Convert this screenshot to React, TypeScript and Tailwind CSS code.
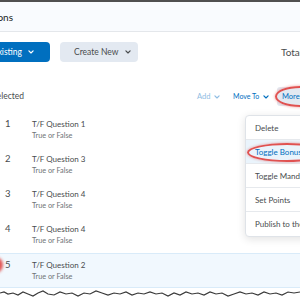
import React from 'react';

const questions = [
  { n: 1, title: 'T/F Question 1' },
  { n: 2, title: 'T/F Question 3' },
  { n: 3, title: 'T/F Question 4' },
  { n: 4, title: 'T/F Question 4' },
  { n: 5, title: 'T/F Question 2', selected: true },
];

const menuItems = ['Delete', 'Toggle Bonus', 'Toggle Mandatory', 'Set Points', 'Publish to the Question Library'];

function Chevron({ className }: { className?: string }) {
  return (
    <svg viewBox="0 0 8 5" className={className} fill="none" stroke="currentColor" strokeWidth="1.6" strokeLinecap="round" strokeLinejoin="round">
      <path d="M1.2 1 L4 3.8 L6.8 1" />
    </svg>
  );
}

// jagged "torn" line along the bottom of the screenshot
const tornPoints =
  '0,293 4,292 8,294 13,293 18,295 23,292 28,294 33,296 38,293 43,291 48,294 54,295 60,292 66,294 72,293 78,296 84,293 90,294 96,291 102,293 108,295 114,293 120,294 126,292 132,295 138,293 144,294 150,292 156,294 162,293 168,296 174,293 180,295 186,292 192,294 198,293 204,295 210,292 216,294 222,293 228,296 234,294 240,292 246,294 252,293 258,295 264,292 270,294 276,293 282,295 288,292 294,293 300,292';

export default function App() {
  return (
    <div className="relative w-[300px] h-[300px] overflow-hidden bg-white font-['Lato','Noto_Sans',sans-serif] text-[#494c4e]">
      <div className="h-[2px] bg-[#505050]" />

      {/* page title bar */}
      <header className="h-[30px] bg-[#f9fbfe] border-b border-[#e4e7eb] flex items-center">
        <div className="w-[13px] shrink-0 flex justify-end whitespace-nowrap">
          <span className="text-[10px] leading-none text-[#202122]">Questions</span>
        </div>
      </header>

      {/* primary buttons */}
      <div className="mt-[10px] h-[20px] flex items-center">
        <div className="w-[50px] shrink-0 flex justify-end">
          <button className="shrink-0 h-[20px] rounded-[4px] bg-[#006fbf] text-white text-[8.5px] pl-[14px] pr-[16px] flex items-center gap-[6px] whitespace-nowrap">
            Add Existing
            <Chevron className="w-[6px] h-[4px]" />
          </button>
        </div>
        <button className="ml-[10px] w-[78px] shrink-0 h-[20px] rounded-[4px] bg-[#e3e9f1] text-[#494c4e] text-[8.5px] pl-[14px] flex items-center gap-[7px] whitespace-nowrap">
          Create New
          <Chevron className="w-[6px] h-[4px]" />
        </button>
        <span className="ml-[143px] shrink-0 whitespace-nowrap text-[10px] text-[#494c4e]">Total Points: 5</span>
      </div>

      {/* selection toolbar */}
      <div className="mt-[25px] h-[19px] flex items-center">
        <div className="w-[24px] shrink-0 flex justify-end whitespace-nowrap">
          <span className="text-[8.5px] text-[#494c4e]">1 Selected</span>
        </div>
        <span className="ml-[173px] w-[23px] shrink-0 flex items-center justify-between whitespace-nowrap text-[7.5px] text-[#8fbde3]">
          Add
          <Chevron className="w-[6px] h-[4px]" />
        </span>
        <span className="ml-[13px] w-[36px] shrink-0 flex items-center justify-between whitespace-nowrap text-[7px] text-[#006fbf]">
          Move To
          <Chevron className="w-[6px] h-[4px]" />
        </span>
        <span className="ml-[8px] shrink-0 h-[19px] rounded-[3px] bg-[#e3e9f1] pl-[5px] pr-[6px] flex items-center whitespace-nowrap text-[7.5px] text-[#006fbf]">
          More Actions
        </span>
      </div>

      {/* question list */}
      <div className="mt-[7px]">
        {questions.map((q) => (
          <div
            key={q.n}
            className={
              q.selected
                ? 'h-[35px] flex bg-[#f1f8fe] border-y border-[#d9ebf9]'
                : 'h-[35px] flex'
            }
          >
            <div className="w-[32px] shrink-0 pl-[5px] pt-[5px] text-[9.5px] leading-[12px] text-[#494c4e]">{q.n}</div>
            <div className="pt-[6px]">
              <div className="text-[8px] leading-[10px] text-[#494c4e] whitespace-nowrap">{q.title}</div>
              <div className="mt-[3px] text-[7.3px] leading-[8px] text-[#6e7376] whitespace-nowrap">True or False</div>
            </div>
          </div>
        ))}
      </div>

      {/* open "More Actions" dropdown */}
      <div className="absolute left-[245px] top-[115px] w-[130px] bg-white border border-[#dfe3e8] rounded-[4px] shadow-[0_2px_8px_rgba(0,0,0,0.12)]">
        {menuItems.map((item, i) => (
          <div
            key={item}
            className={
              (i === 1 ? 'bg-[#eaf4fc] text-[#006fbf] ' : 'text-[#494c4e] ') +
              (i < menuItems.length - 1 ? 'border-b border-[#e6e9ed] ' : '') +
              'h-[24px] pl-[9px] flex items-center whitespace-nowrap text-[8px]'
            }
          >
            {item}
          </div>
        ))}
      </div>

      {/* red annotation marks */}
      <div className="absolute left-[275px] top-[86px] w-[50px] h-[21px] rounded-[50%] border-2 border-[#e0413f] opacity-90 shadow-[0_0_3px_rgba(224,65,63,0.6)]" />
      <div className="absolute left-[247px] top-[143px] w-[80px] h-[19px] rounded-[50%] border-2 border-[#e0413f] opacity-90 shadow-[0_0_3px_rgba(224,65,63,0.6)]" />
      <div className="absolute left-[-13px] top-[257px] w-[16px] h-[16px] rounded-full bg-[#e0413f] blur-[1.5px] opacity-90" />

      {/* torn paper edge */}
      <svg className="absolute left-0 top-0" width="300" height="300" viewBox="0 0 300 300">
        <polygon points={`${tornPoints} 300,300 0,300`} fill="#ffffff" />
        <polyline points={tornPoints} fill="none" stroke="#3a3a3a" strokeWidth="1.2" />
      </svg>
    </div>
  );
}
